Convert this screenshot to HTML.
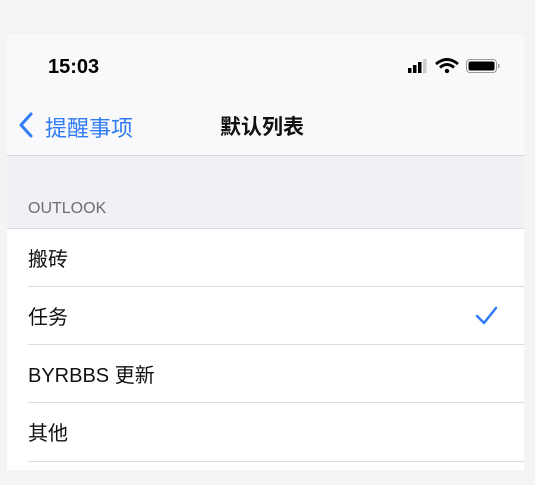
<!DOCTYPE html><html><head><meta charset="utf-8"><style>
body{margin:0;width:535px;height:485px;background:#f4f4f4;font-family:"Liberation Sans","Noto Sans CJK SC",sans-serif;position:relative;overflow:hidden}
.p{position:absolute;left:7px;top:34px;width:517px;height:436px;background:#fff;overflow:hidden}
.top{position:absolute;left:0;top:0;width:517px;height:121px;background:#f9f9fb;border-bottom:1px solid #d6d6d8}
.sec{position:absolute;left:0;top:122px;width:517px;height:72px;background:#f1f1f5}
.t{position:absolute;white-space:nowrap}
.row{position:absolute;left:21px;font-size:20px;color:#111}
.sep{position:absolute;left:21px;right:0;height:1px;background:#dcdcdf}
</style></head><body><div class="p">
<div class="top">
<div class="t" style="left:41px;top:22px;font-size:20px;font-weight:bold">15:03</div>
<svg style="position:absolute;left:400px;top:24px" width="95" height="17">
<rect x="1" y="10" width="3.5" height="5" fill="#000"/><rect x="6" y="7" width="3.5" height="8" fill="#000"/><rect x="11" y="4" width="3.5" height="11" fill="#000"/><rect x="16" y="1" width="3.5" height="14" fill="#ccc"/>
<path d="M29 6 Q40 -3 51 6" stroke="#000" stroke-width="2.8" fill="none"/><path d="M33 9.5 Q40 3.5 47 9.5" stroke="#000" stroke-width="2.8" fill="none"/><circle cx="40" cy="13" r="2.2" fill="#000"/>
<rect x="59.5" y="1.5" width="30" height="13" rx="3.5" fill="none" stroke="#999" stroke-width="1"/><rect x="61.5" y="3.5" width="26" height="9" rx="2" fill="#000"/><rect x="91" y="6" width="1.5" height="4" fill="#999"/>
</svg>
<svg style="position:absolute;left:11px;top:78px" width="16" height="26"><path d="M13 2 L3 13 L13 24" stroke="#2f7cf6" stroke-width="3" fill="none" stroke-linecap="round" stroke-linejoin="round"/></svg>
<div class="t" style="left:38px;top:77px;font-size:22px;color:#2f7cf6">提醒事项</div>
<div class="t" style="left:213px;top:77px;font-size:21px;font-weight:bold;color:#111">默认列表</div>
</div>
<div class="sec"><div class="t" style="left:21px;top:44px;font-size:16px;color:#6d6d72">OUTLOOK</div></div>
<div class="sep" style="left:0;top:194px"></div>
<div class="row" style="top:209px">搬砖</div>
<div class="sep" style="top:252px"></div>
<div class="row" style="top:267px">任务</div>
<svg style="position:absolute;left:468px;top:271px" width="24" height="22"><path d="M2 11 L9 18 L21 3" stroke="#2f7cf6" stroke-width="2.5" fill="none" stroke-linecap="round" stroke-linejoin="round"/></svg>
<div class="sep" style="top:310px"></div>
<div class="row" style="top:325px">BYRBBS 更新</div>
<div class="sep" style="top:368px"></div>
<div class="row" style="top:383px">其他</div>
<div class="sep" style="top:427px"></div>
</div></body></html>
